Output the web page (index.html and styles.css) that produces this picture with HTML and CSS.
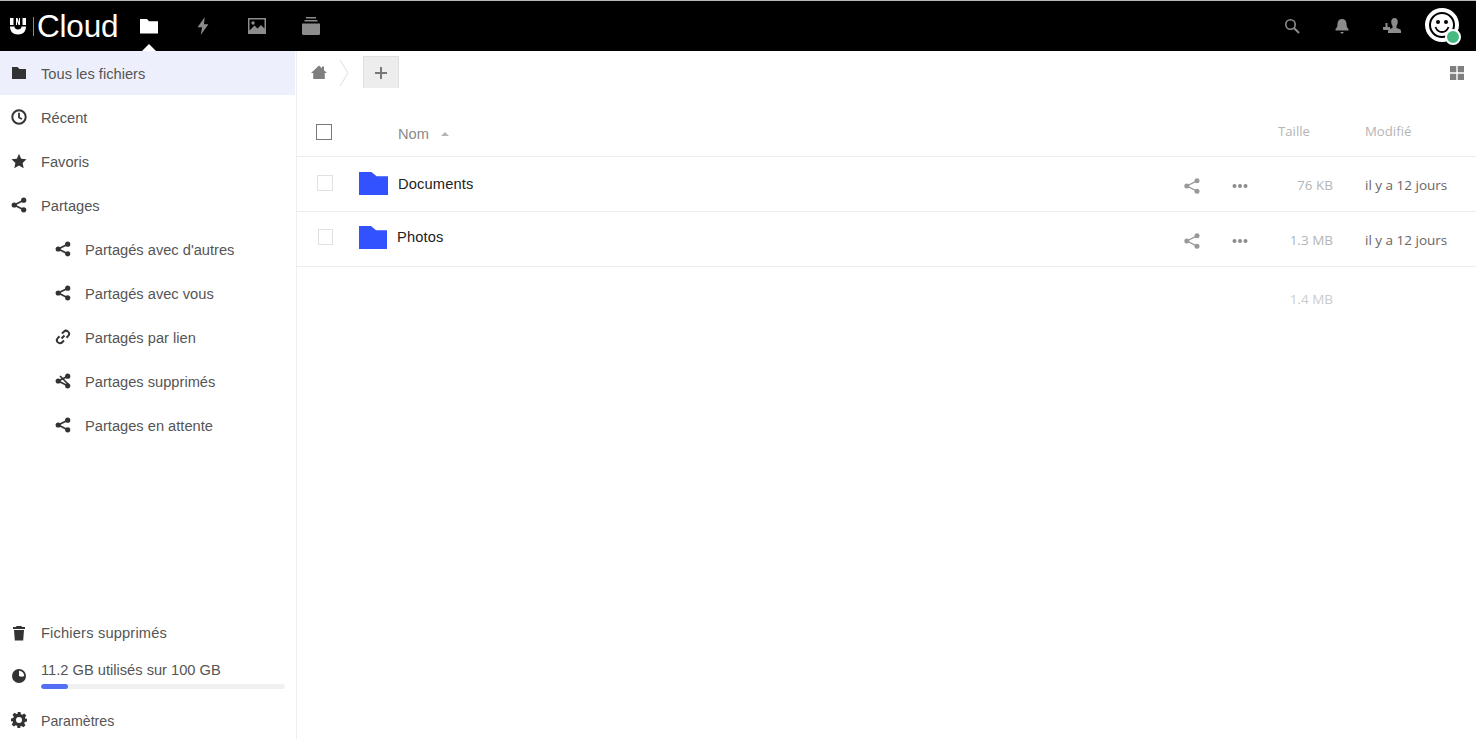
FILE: index.html
```html
<!DOCTYPE html>
<html lang="fr">
<head>
<meta charset="utf-8">
<title>Fichiers - UCloud</title>
<link rel="stylesheet" href="styles.css">
</head>
<body>
<svg class="defs" width="0" height="0" aria-hidden="true">
  <symbol id="i-folder" viewBox="0 0 16 16"><path d="M1 2h5.500l2 2H15v10H1z"/></symbol>
  <symbol id="i-share" viewBox="0 0 16 16"><circle cx="12.700" cy="3.200" r="2.600"/><circle cx="3.200" cy="8" r="2.600"/><circle cx="12.700" cy="12.800" r="2.600"/><path d="M12.700 3.200 3.200 8l9.500 4.800" fill="none" stroke="currentColor" stroke-width="1.700"/></symbol>
  <symbol id="i-share-thin" viewBox="0 0 16 16"><circle cx="13" cy="2.800" r="2.500"/><circle cx="2.800" cy="8" r="2.500"/><circle cx="13" cy="13.200" r="2.500"/><path d="M13 2.800 2.800 8 13 13.200" fill="none" stroke="currentColor" stroke-width="1.300"/></symbol>
  <symbol id="i-home" viewBox="0 0 16 16"><path d="M8 1.500 11 4.300V2.500h2v3.700l3 2.800h-2.200V15H2.200V9H0z"/></symbol>
</svg>
<header class="topbar">
  <div class="logo">
    <svg class="logo-mark" viewBox="0 0 16 17"><path d="M0 0h3.500v7H0zM6 0h1.500l1.500 4V0h1v7H8.500L7 3v4H6zM12.500 0H16v7h-3.500z" fill="#fff"/><path d="M0 8.500h4.500c0 2 1.500 3 3.500 3s3.500-1 3.500-3H16C16 13.500 13 16.500 8 16.500S0 13.500 0 8.500z" fill="#fff"/></svg>
    <span class="logo-sep"></span>
    <span class="logo-text">Cloud</span>
  </div>
  <nav class="apps">
    <a class="app app-on"><svg class="app-ico" viewBox="0 0 18 16"><path d="M0 1h7l2 2.200h9V15.500H0z" fill="#fff"/></svg></a>
    <a class="app"><svg class="app-ico" viewBox="0 0 18 20"><path d="M11 0 3 11.500h5L6.500 20 15 8h-5z" fill="#8c8c8c"/></svg></a>
    <a class="app"><svg class="app-ico" viewBox="0 0 18 16"><path fill-rule="evenodd" d="M0 0h18v16H0zM1.500 1.500v11l5-5 3 3 3.500-3.500 3.500 3.500v-9z" fill="#8c8c8c"/><circle cx="5" cy="5" r="1.700" fill="#8c8c8c"/></svg></a>
    <a class="app"><svg class="app-ico" viewBox="0 0 18 18"><path d="M4 0h10v1.500H4zM2.500 3h13v1.500h-13z" fill="#8c8c8c"/><path d="M0 6.500h18v10q0 1.500-1.500 1.500h-15Q0 18 0 16.500z" fill="#8c8c8c"/></svg></a>
  </nav>
  <div class="tools">
    <svg class="tool" viewBox="0 0 16 16"><circle cx="6.500" cy="6.500" r="4.700" fill="none" stroke="#8c8c8c" stroke-width="1.600"/><path d="m10 10 5 5" stroke="#8c8c8c" stroke-width="2"/></svg>
    <svg class="tool tool-bell" viewBox="0 0 16 16"><path d="M8 1c3 0 4.500 2 4.500 5 0 3 1 4 2 5v1.500h-13V11c1-1 2-2 2-5 0-3 1.500-5 4.500-5z" fill="#8c8c8c"/><path d="M6 14h4l-2 2z" fill="#8c8c8c"/></svg>
    <svg class="tool tool-wide" viewBox="0 0 18 16"><path d="M11.500 0c2.200 0 3.300 1.800 3.300 3.800 0 1.800-.8 3.200-1.300 4.200v2c2 .5 4.500 1 4.500 3V15H5v-2c0-1.500 2-2.500 4.500-3V8C9 7 8.200 5.600 8.200 3.800 8.200 1.800 9.300 0 11.500 0z" fill="#8c8c8c"/><path d="M2.500 5h2v4H7v3H.8Q0 12 0 11V9h2.500z" fill="#8c8c8c"/></svg>
    <div class="avatar">
      <svg class="avatar-face" viewBox="0 0 34 34" width="34" height="34"><circle cx="17" cy="17" r="17" fill="#fff"/><circle cx="17" cy="17" r="12" fill="none" stroke="#000" stroke-width="2"/><circle cx="13" cy="14" r="2" fill="#000"/><circle cx="21" cy="14" r="2" fill="#000"/><path d="M10.500 19c1.500 4 4 5 6.500 5s5-1 6.500-5" fill="none" stroke="#000" stroke-width="1.800"/></svg>
      <span class="status"></span>
    </div>
  </div>
</header>
<div class="layout">
  <aside class="sidebar">
    <ul class="nav">
      <li class="nav-item nav-active"><svg class="ico"><use href="#i-folder"/></svg><span>Tous les fichiers</span></li>
      <li class="nav-item"><svg class="ico" viewBox="0 0 16 16"><circle cx="8" cy="8" r="6.700" fill="none" stroke="currentColor" stroke-width="2"/><path d="M8 3.800V8.500l3 1.500" fill="none" stroke="currentColor" stroke-width="1.800"/></svg><span>Récent</span></li>
      <li class="nav-item"><svg class="ico" viewBox="0 0 16 16"><path d="m8 .8 2.200 4.900 5.300.6-3.900 3.600 1.100 5.300L8 12.500l-4.700 2.700 1.100-5.300L.5 6.300l5.300-.6z"/></svg><span>Favoris</span></li>
      <li class="nav-item"><svg class="ico"><use href="#i-share"/></svg><span>Partages</span></li>
      <li class="nav-item nav-sub"><svg class="ico"><use href="#i-share"/></svg><span>Partagés avec d'autres</span></li>
      <li class="nav-item nav-sub"><svg class="ico"><use href="#i-share"/></svg><span>Partagés avec vous</span></li>
      <li class="nav-item nav-sub"><svg class="ico" viewBox="0 0 16 16"><path d="M6.500 9.500 9.500 6.500M7 4.500l1.800-1.800a3 3 0 0 1 4.400 4.200L11.500 8.700M9 11.500l-1.800 1.800a3 3 0 0 1-4.400-4.200L4.500 7.300" fill="none" stroke="currentColor" stroke-width="2"/></svg><span>Partagés par lien</span></li>
      <li class="nav-item nav-sub"><svg class="ico" viewBox="0 0 16 16"><circle cx="12.700" cy="3.200" r="2.600"/><circle cx="3.200" cy="8" r="2.600"/><circle cx="12.700" cy="12.800" r="2.600"/><path d="M12.700 3.200 3.200 8l9.500 4.800M5 3l9 9" fill="none" stroke="currentColor" stroke-width="1.700"/></svg><span>Partages supprimés</span></li>
      <li class="nav-item nav-sub"><svg class="ico"><use href="#i-share"/></svg><span>Partages en attente</span></li>
    </ul>
    <div class="side-bottom">
      <div class="nav-item nav-trash"><svg class="ico" viewBox="0 0 16 16"><path d="M5.500 1h5l.5 1h3v2H2V2h3zM3 5h10l-.8 10.500H3.800z"/></svg><span>Fichiers supprimés</span></div>
      <div class="quota">
        <svg class="ico" viewBox="0 0 16 16"><circle cx="8" cy="8" r="7"/><path d="M8 2.800A5.200 5.200 0 0 1 13.200 8 5.200 5.200 0 0 1 8 8z" fill="#fff"/></svg>
        <div class="quota-body">
          <div class="quota-text">11.2 GB utilisés sur 100 GB</div>
          <div class="quota-bar"><div class="quota-fill" style="width:11.2%"></div></div>
        </div>
      </div>
      <div class="nav-item nav-settings"><svg class="ico" viewBox="0 0 16 16"><path fill-rule="evenodd" d="M6.500 0h3l.4 2.200 1.400.6 1.900-1.300 2.100 2.100-1.300 1.900.6 1.400L16 6.500v3l-2.200.4-.6 1.400 1.300 1.900-2.100 2.100-1.900-1.300-1.400.6L9.500 16h-3l-.4-2.200-1.400-.6-1.900 1.300-2.100-2.100 1.300-1.900-.6-1.400L0 9.500v-3l2.200-.4.600-1.400L1.500 2.800l2.100-2.100 1.900 1.300 1.400-.6zM8 5a3 3 0 1 0 0 6 3 3 0 0 0 0-6z"/></svg><span>Paramètres</span></div>
    </div>
  </aside>
  <main class="content">
    <div class="crumbs">
      <svg class="crumb-home"><use href="#i-home"/></svg>
      <svg class="crumb-sep" viewBox="0 0 10 26"><path d="M1 0l8 13-8 13" fill="none" stroke="#ddd"/></svg>
      <button class="add" type="button"><svg viewBox="0 0 14 14" width="14" height="14"><path d="M7 1v12M1 7h12" stroke="#777" stroke-width="2"/></svg></button>
      <svg class="view-toggle" viewBox="0 0 14 14"><path d="M0 0h6.300v6.300H0zM7.700 0H14v6.300H7.700zM0 7.700h6.300V14H0zM7.700 7.700H14V14H7.700z" fill="#7f7f7f"/></svg>
    </div>
    <div class="thead">
      <span class="check check-head"></span>
      <span class="th-name">Nom<i class="sort"></i></span>
      <span class="th-size">Taille</span>
      <span class="th-date">Modifié</span>
    </div>
    <div class="row row-doc">
      <span class="check"></span>
      <svg class="folder" viewBox="0 0 28 22" preserveAspectRatio="none"><path d="M0 0h12l5 4h11v18H0z" fill="#3352ff"/></svg>
      <span class="name">Documents</span>
      <svg class="act"><use href="#i-share-thin"/></svg>
      <svg class="more" viewBox="0 0 16 4"><circle cx="2.500" cy="2" r="2"/><circle cx="8" cy="2" r="2"/><circle cx="13.500" cy="2" r="2"/></svg>
      <span class="size">76 KB</span>
      <span class="date">il y a 12 jours</span>
    </div>
    <div class="row row-photo">
      <span class="check"></span>
      <svg class="folder" viewBox="0 0 28 22" preserveAspectRatio="none"><path d="M0 0h12l5 4h11v18H0z" fill="#3352ff"/></svg>
      <span class="name">Photos</span>
      <svg class="act"><use href="#i-share-thin"/></svg>
      <svg class="more" viewBox="0 0 16 4"><circle cx="2.500" cy="2" r="2"/><circle cx="8" cy="2" r="2"/><circle cx="13.500" cy="2" r="2"/></svg>
      <span class="size">1.3 MB</span>
      <span class="date">il y a 12 jours</span>
    </div>
    <div class="summary"><span class="size size-sum">1.4 MB</span></div>
  </main>
</div>
</body>
</html>
```
FILE: styles.css
```css
* { box-sizing: border-box; }
html, body { margin: 0; padding: 0; height: 739px; overflow: hidden; background: #fff; }
body { font-family: "Liberation Sans", Arial, sans-serif; font-size: 14.67px; color: #555; display: flex; flex-direction: column; border-top: 1px solid #b8b8b8; }
.defs { position: absolute; }
.topbar { height: 50px; background: #000; display: flex; align-items: center; flex: none; }
.logo { display: flex; align-items: center; margin-left: 10px; width: 112px; }
.logo-mark { width: 16px; height: 17px; margin-top: 1px; flex: none; }
.logo-sep { width: 1px; height: 19px; background: #888; margin: 1px 3px 0 7px; flex: none; }
.logo-text { color: #fff; font-size: 31.500px; line-height: 36px; letter-spacing: -.2px; }
.apps { display: flex; height: 50px; }
.app { width: 54px; height: 50px; display: flex; align-items: center; justify-content: center; position: relative; }
.app-ico { width: 18px; height: 18px; }
.app-on::after { content: ""; position: absolute; bottom: 0; left: 20px; border: 7px solid transparent; border-top: 0; border-bottom-color: #fff; }
.tools { margin-left: auto; display: flex; align-items: center; height: 50px; padding-right: 17px; }
.tool { width: 16px; height: 16px; margin-right: 34px; }
.tool-bell { margin-right: 33px; }
.tool-wide { width: 18px; margin-right: 24px; }
.avatar { width: 34px; height: 34px; position: relative; margin-top: -2px; }
.avatar-face { display: block; }
.status { position: absolute; left: 20px; top: 21px; width: 16px; height: 16px; border-radius: 50%; background: #46ba81; border: 2px solid #fff; }

.layout { flex: 1; display: flex; min-height: 0; }
.sidebar { width: 297px; flex: none; border-right: 1px solid #eee; display: flex; flex-direction: column; }
.nav { list-style: none; margin: 0; padding: 0; }
.nav-item { height: 44px; display: flex; align-items: center; padding-left: 11px; }
.nav-item span { margin-left: 14px; position: relative; top: 1px; }
.nav-active { background: #edeffc; width: 295px; }
.nav-sub { padding-left: 55px; }
.ico { width: 16px; height: 16px; fill: #333; color: #333; flex: none; }
.side-bottom { margin-top: auto; }
.nav-trash { height: 36px; letter-spacing: .17px; }
.nav-trash span { top: 0; }
.quota { display: flex; padding-left: 11px; height: 50px; align-items: center; }
.quota-body { margin-left: 14px; width: 244px; padding-bottom: 2px; }
.quota-text { line-height: 16px; position: relative; top: 1px; }
.quota-bar { margin-top: 7px; height: 5px; border-radius: 3px; background: #f0f0f0; overflow: hidden; }
.quota-fill { height: 5px; background: #5370f5; border-radius: 3px; }
.nav-settings { height: 38px; font-size: 14.200px; }

.content { flex: 1; min-width: 0; }
.crumbs { height: 37px; display: flex; align-items: flex-start; padding-left: 14px; }
.crumb-home { width: 16px; height: 16px; fill: #7f7f7f; margin-top: 13px; flex: none; }
.crumb-sep { width: 10px; height: 26px; margin-left: 12px; margin-top: 9px; flex: none; }
.add { width: 36px; height: 32px; margin: 5px 0 0 14px; padding: 0; background: #ededed; border: 1px solid #e0e0e0; border-bottom: 0; display: flex; align-items: center; justify-content: center; }
.view-toggle { width: 14px; height: 14px; margin-left: auto; margin-right: 12px; margin-top: 15px; }
.thead { height: 69px; border-bottom: 1px solid #ededed; display: flex; align-items: flex-end; padding: 0 0 15px 19px; }
.check { width: 16px; height: 16px; border: 1px solid #e0e0e0; flex: none; display: block; }
.check-head { border-color: #7a7a7a; margin-bottom: 1px; }
.th-name { margin-left: 66px; color: #8a8a8a; display: flex; align-items: center; line-height: 16px; margin-bottom: -1px; }
.sort { margin-left: 12px; border: 4px solid transparent; border-top: 0; border-bottom: 4px solid #b5b5b5; }
.th-size, .th-date { font-family: "Open Sans", sans-serif; font-size: 13.200px; color: #b5b5b5; line-height: 16px; margin-bottom: 2px; }
.th-size { margin-left: auto; }
.th-date { width: 111px; margin-left: 55px; }
.row { height: 55px; border-bottom: 1px solid #ededed; display: flex; align-items: center; padding-left: 20px; }
.folder { width: 29px; height: 23px; margin-left: 26px; flex: none; position: relative; top: -1px; }
.name { margin-left: 10px; color: #222; line-height: 16px; position: relative; top: 0; letter-spacing: .15px; }
.row-doc .check { position: relative; top: -1px; }
.row-photo .name { margin-left: 10px; top: -2px; }
.row-photo .folder { width: 28px; margin-left: 27px; top: -2px; }
.row-photo .check { position: relative; top: -2px; left: 1px; width: 15px; }
.act { width: 16px; height: 16px; fill: #999; color: #999; margin-left: auto; position: relative; top: 2px; }
.more { width: 16px; height: 4px; fill: #8c8c8c; margin-left: 32px; position: relative; top: 2px; }
.size { font-family: "Open Sans", sans-serif; font-size: 13.500px; color: #b5b5b5; width: 85px; text-align: right; position: relative; top: 1px; }
.date { font-family: "Open Sans", sans-serif; font-size: 13.500px; color: #666; width: 143px; padding-left: 32px; position: relative; top: 1px; }
.summary { height: 64px; display: flex; padding-top: 23px; justify-content: flex-end; padding-right: 143px; }
.size-sum { top: 0; color: #ccc; width: auto; line-height: 18px; }
```
